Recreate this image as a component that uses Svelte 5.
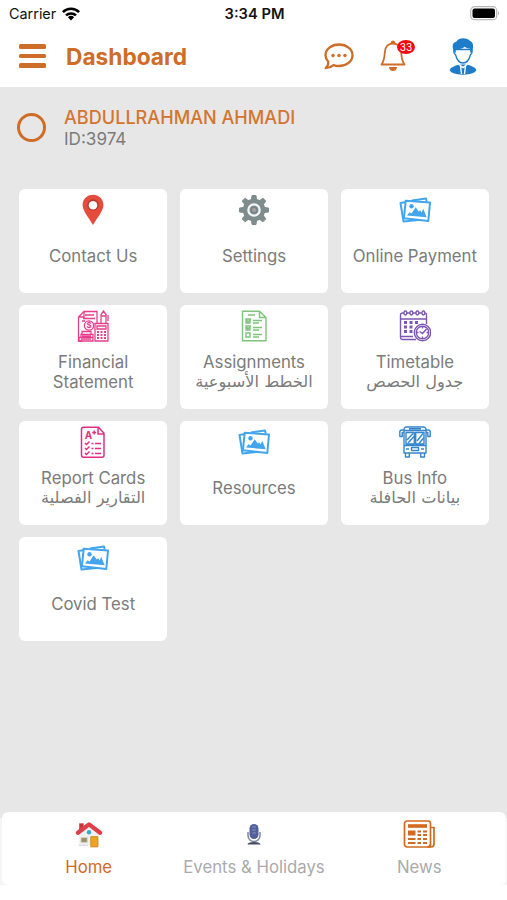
<script>
  const unread = 33;

  const student = {
    name: 'ABDULLRAHMAN AHMADI',
    id: '3974'
  };

  const tiles = [
    { title: 'Contact Us', icon: pin },
    { title: 'Settings', icon: gear },
    { title: 'Online Payment', icon: gallery },
    { title: 'Financial Statement', icon: finance },
    { title: 'Assignments', arabic: 'الخطط الأسبوعية', icon: checklist },
    { title: 'Timetable', arabic: 'جدول الحصص', icon: calendar },
    { title: 'Report Cards', arabic: 'التقارير الفصلية', icon: report },
    { title: 'Resources', icon: gallery },
    { title: 'Bus Info', arabic: 'بيانات الحافلة', icon: bus },
    { title: 'Covid Test', icon: gallery }
  ];

  const tabs = [
    { title: 'Home', icon: house },
    { title: 'Events & Holidays', icon: mic },
    { title: 'News', icon: news }
  ];

  let active = $state('Home');
</script>

{#snippet pin()}
  <svg viewBox="0 0 32 32">
    <path d="M16 .8C10 .8 5.600 5.200 5.600 11c0 5.500 4.900 11 10.400 20 5.500-9 10.400-14.500 10.400-20C26.400 5.200 22 .8 16 .8z" fill="#e64c3c" />
    <circle cx="16" cy="11" r="5.700" fill="#b4382c" />
    <circle cx="16" cy="11.300" r="4.300" fill="#fff" />
  </svg>
{/snippet}

{#snippet gear()}
  <svg viewBox="0 0 32 32">
    <g fill="#7f8c8d">
      <circle cx="16" cy="16" r="11.200" />
      {#each [0, 45, 90, 135, 180, 225, 270, 315] as angle}
        <path d="M13.400 6.500 14 1.500h4l.6 5z" stroke="#7f8c8d" stroke-linejoin="round" transform="rotate({angle} 16 16)" />
      {/each}
    </g>
    <circle cx="16" cy="16" r="5.700" fill="#95a5a6" stroke="#f4f6f6" stroke-width="2.200" />
    <circle cx="16" cy="16" r="3" fill="#a5a29b" stroke="#75868a" stroke-width="1.800" />
  </svg>
{/snippet}

{#snippet gallery()}
  <svg viewBox="0 0 32 32">
    <g fill="none" stroke="#42a5ed" stroke-width="2" stroke-linejoin="round">
      <path d="M7 8 1.500 9l3 18.500L24 25.500M13 6.500l14-2 .7 3" />
      <path d="M6.700 6.800 31 8.500 29.300 27 4.900 24.200z" fill="#fff" />
    </g>
    <circle cx="12.500" cy="12.200" r="2.200" fill="#42a5ed" />
    <path d="m8 21.500 2.500-3.200 2 1.300 4.200-6.300 3 4.200 1.500-1.300 1.400 2.300 1.600-3.800 3.500 8.500z" fill="#42a5ed" />
  </svg>
{/snippet}

{#snippet finance()}
  <svg viewBox="0 0 32 32" fill="none" stroke="#e83e8c" stroke-width="1.300">
    <path d="M8 1.500h12v12M7 1.500 1.500 7v24h4M1.500 7H7V1.500h1M8 5h9M6 8.500h12M5 11h3" />
    <circle cx="12" cy="15.500" r="4.600" />
    <path d="M5 21.500h9v2.800H5zM4 24.300h12v3.200H4zM2 27.500h14v3.500H2zM5 26h9M4 29.200h10M18 13.500h13V31H18zM20 16h9v3h-9z" />
    <path d="M20 22h2m1.500 0h2m1.500 0h2m-9 3h2m1.500 0h2m1.500 0h2m-9 3h2m1.500 0h2m1.500 0h2" stroke-width="1.800" />
    <path d="M24 13V4.500L26.500 1 29 4.500V13M24 6h5M31 5v6" />
    <text x="12" y="18.300" class="glyph dollar" fill="#e83e8c">$</text>
  </svg>
{/snippet}

{#snippet checklist()}
  <svg viewBox="0 0 32 32" fill="none" stroke="#7fc47b" stroke-width="1.400">
    <path d="M4.500 1.200h17L28 7.500v23.300H4.500zM21.500 1.200v6.300H28M10 5h7" />
    <path d="M8 9h4v4H8zM8 16h4v4H8zM8 23h4v4H8zM8.500 10l1.500 2 3-3.500M8.500 17l1.500 2 3-3.500" />
    <path d="M15 10.500h9M15 13h6M15 17.500h9M15 20h6M15 24.500h9M15 27h6" stroke-width="1.700" />
  </svg>
{/snippet}

{#snippet calendar()}
  <svg viewBox="0 0 32 32" fill="none" stroke="#7e57b5" stroke-width="1.400">
    <path d="M17 29.500H3.500a2 2 0 0 1-2-2V5a2 2 0 0 1 2-2h22a2 2 0 0 1 2 2v9M1.500 9h26M2 26.500h12" />
    <g fill="#fff">
      {#each [5, 11, 17, 23] as x}
        <rect {x} y="1" width="2.800" height="4" rx="1.400" />
      {/each}
    </g>
    <path d="M5 12.500h3m2.500 0h3m2.500 0h3M5 17h3m2.500 0h3M5 21.500h3m2.500 0h3" stroke-width="2.800" />
    <circle cx="23.500" cy="22.500" r="8.200" fill="#fff" />
    <circle cx="23.500" cy="22.500" r="6.200" />
    <path d="m20.500 21.500 3 2 4-4.500M23.500 17v1.500m0 8V28M18 22.500h1.500m8 0H29" />
  </svg>
{/snippet}

{#snippet report()}
  <svg viewBox="0 0 32 32" fill="none" stroke="#e22f83" stroke-width="1.500">
    <path d="M6.500 1.200h15l5.500 6v22a2 2 0 0 1-2 2H6.500a2 2 0 0 1-2-2v-26a2 2 0 0 1 2-2zM21 1.500V8h6" stroke-linejoin="round" />
    <path d="m8 17 1.500 1.500 3-3M8 22l1.500 1.500 3-3M8 27l1.500 1.500 3-3M14.500 17.500h2m1.500 0h6M14.500 22.500h2m1.500 0h6M14.500 27.500h2m1.500 0h6" />
    <text x="11.500" y="12.700" class="glyph grade" fill="#e22f83">A</text>
    <path d="M15.200 6.500h4M17.200 4.500v4" />
  </svg>
{/snippet}

{#snippet bus()}
  <svg viewBox="0 0 32 32" fill="none" stroke="#3487cc" stroke-width="1.400" stroke-linejoin="round">
    <path d="M7.500 1h17a2.500 2.500 0 0 1 2.500 2.500V27H5V3.500A2.500 2.500 0 0 1 7.500 1zM5 4.500h22M7 6.500h8.300V18H7zM16.700 6.500H25V18h-8.300zM5 19.500h22M10 2.800h12" />
    <path d="M5 4H3Q.8 4 .8 6v4.500h2.400V6.500H5M27 4h2q2.200 0 2.200 2v4.500h-2.400V6.500H27" />
    <path d="m8 14 6-6.500M9 17l6-6.500M18 15l6-7.500M20 17.500l5-6" />
    <path d="M12.500 21.500h7v3h-7zM7 23h3m12 0h3M6.500 27v4h3.800v-4M21.700 27v4h3.800v-4" />
  </svg>
{/snippet}

{#snippet house()}
  <svg viewBox="-2 -1 36 36">
    <path d="m5 16 11-9 11 9v14H5z" fill="#eef0f2" />
    <path d="M5 5h5v8H5z" fill="#c8323c" />
    <path d="M3.500 15.500 16 6.200l12.500 9.300" fill="none" stroke="#df3f49" stroke-width="4.800" stroke-linecap="round" stroke-linejoin="round" />
    <circle cx="16" cy="15" r="2.500" fill="#3aa6c9" />
    <path d="M7 21h7v5.500H7z" fill="#9a9170" stroke="#d6d2b9" />
    <path d="M18 20h8v11.500h-8z" fill="#eda51f" stroke="#cd861c" />
    <path d="M4 29h11v1.500H4z" fill="#dedede" />
  </svg>
{/snippet}

{#snippet mic()}
  <svg viewBox="0 0 32 32">
    <rect x="11.500" y="6" width="9" height="15" rx="4.500" fill="#526099" />
    <path d="M14 9h4M14 12h4M14 15h4" stroke="#8490bd" stroke-width="1.100" />
    <path d="M10 14v3.500a6 6 0 0 0 12 0V14M16 23v2" fill="none" stroke="#80869a" stroke-width="1.500" />
    <path d="M9.500 26.500q0-2.500 6.500-2.500t6.500 2.500z" fill="#454c65" />
  </svg>
{/snippet}

{#snippet news()}
  <svg viewBox="0 0 32 32" fill="none" stroke="#d2691e" stroke-width="1.700">
    <rect x="1.500" y="3" width="26" height="26" rx="2.500" />
    <path d="M28 9.500h3V26a3 3 0 0 1-3 3h-3.500q3 0 3-3" />
    <path d="M5 8h19" stroke-width="3.600" />
    <path d="M5 15h7.500" stroke-width="5" />
    <path d="M14.500 13.500H18m2 0h4M14.500 17H18m2 0h4M5 21h7.500m2 0H18m2 0h4M5 25h7.500m2 0H18m2 0h4" stroke-width="1.900" />
  </svg>
{/snippet}

<div class="app">
  <div class="status-bar">
    <div class="carrier">
      <span>Carrier</span>
      <svg viewBox="0 0 18 14" width="18" height="14">
        <g fill="none" stroke="#000" stroke-width="2.500">
          <path d="M.9 5.200a11.500 11.500 0 0 1 16.200 0M4 8.400a7.200 7.200 0 0 1 10 0" />
        </g>
        <path d="M5.900 10.300a4.500 4.500 0 0 1 6.200 0L9 13.500z" />
      </svg>
    </div>
    <div class="time">3:34 PM</div>
    <div class="battery">
      <svg viewBox="0 0 30 15" width="30" height="15">
        <rect x=".7" y=".7" width="26" height="13" rx="3.800" fill="none" stroke="#b8b8b8" stroke-width="1.200" />
        <rect x="2.500" y="2.500" width="22.500" height="9.500" rx="2" />
        <path d="M28 5q2 2.200 0 4.500z" fill="#aaa" />
      </svg>
    </div>
  </div>

  <header>
    <button class="menu" aria-label="Menu">
      <span></span>
      <span></span>
      <span></span>
    </button>
    <h1>Dashboard</h1>
    <svg class="chat" viewBox="0 0 30 27" width="30" height="27">
      <path d="M4.300 18.800C2.500 17 1.500 14.800 1.500 12.300 1.500 6.300 7.500 1.500 15 1.500s13.500 4.800 13.500 10.800S22.500 23 15 23c-2 0-3.800-.3-5.500-.9-2.200 1.900-4.900 2.900-7.800 3 1.700-1.700 2.800-3.800 2.600-6.300z" fill="none" stroke="#cd6d28" stroke-width="2.300" stroke-linejoin="round" />
      <g fill="#cd6d28">
        <circle cx="9" cy="12.500" r="1.700" />
        <circle cx="15" cy="12.500" r="1.700" />
        <circle cx="21" cy="12.500" r="1.700" />
      </g>
    </svg>
    <div class="bell">
      <svg viewBox="0 0 26 32" width="26" height="32">
        <path d="M1.500 24.500h23c-2.500-3.500-3-6-3.300-12C21 6.500 17.500 3.500 13 3.500S5 6.500 4.800 12.500c-.3 6-.8 8.500-3.300 12z" fill="none" stroke="#cd6d28" stroke-width="1.800" stroke-linejoin="round" />
        <path d="M10.500 3q.3-2.500 2.500-2.500T15.500 3zM9 27h8q-.5 4-4 4t-4-4z" fill="#cd6d28" />
      </svg>
      <span class="badge">{unread}</span>
    </div>
    <svg class="avatar" viewBox="0 0 30 37" width="30" height="37">
      <path d="M1.500 32c1.500-3 5-4 9.500-5.500h8c4.500 1.500 8 2.500 9.500 5.500L27 34c-6 3.500-18 3.500-24 0z" fill="#1d7dcb" />
      <path d="m10.500 26 4.500 3.500 4.500-3.500M12.500 28l1 8M17.500 28l-1 8" fill="none" stroke="#fff" stroke-width="1.400" />
      <path d="M6.500 11.500c-1.300 1.500-.5 4.500 1 5 1.200 5 4 8.500 7.500 8.500s6.300-3.500 7.500-8.500c1.500-.5 2.300-3.500 1-5z" fill="#fff" stroke="#1d7dcb" stroke-width="1.300" />
      <path d="M6.300 14.500C3.300 8 4.500 4.500 8.500 3.500c2.500-4.500 10-4 13-1 4.500 1.500 4.200 7 2.300 12l-1.300.5-.8-4.500c-2 0-3.700-.8-5-1.800-2.200 1.800-5.200 2.600-8.700 2.600L7.500 15z" fill="#1d7dcb" />
    </svg>
  </header>

  <main>
    <section class="student">
      <div class="ring"></div>
      <div>
        <div class="name">{student.name}</div>
        <div class="id">ID:{student.id}</div>
      </div>
    </section>

    <section class="grid">
      {#each tiles as tile}
        <div class="tile">
          <div class="icon">{@render tile.icon()}</div>
          <div class="label">
            <span>{tile.title}</span>
            {#if tile.arabic}
              <span class="arabic" lang="ar" dir="rtl">{tile.arabic}</span>
            {/if}
          </div>
        </div>
      {/each}
    </section>
  </main>

  <div class="footer">
    <nav>
      {#each tabs as tab}
        <button class="tab" class:active={active === tab.title} onclick={() => (active = tab.title)}>
          <span class="icon">{@render tab.icon()}</span>
          <span>{tab.title}</span>
        </button>
      {/each}
    </nav>
  </div>
</div>

<style>
  :global(body) {
    background: #fff;
  }

  .app {
    display: flex;
    flex-direction: column;
    height: 900px;
    overflow: hidden;
    background: #fff;
    color: #7b7b7b;
    font-family: Inter, "DejaVu Sans", sans-serif;
    font-size: 16.75px;
  }

  svg {
    display: block;
    flex: none;
  }

  button {
    border: none;
    background: none;
    padding: 0;
    font: inherit;
    color: inherit;
  }

  .status-bar {
    display: grid;
    grid-template-columns: 1fr auto 1fr;
    align-items: center;
    height: 27px;
    padding: 0 7px 0 9px;
    color: #111;
    font-size: 14.4px;
  }

  .carrier {
    display: flex;
    align-items: center;
    gap: 6px;
  }

  .time {
    font-size: 14.7px;
    font-weight: 600;
  }

  .battery {
    display: flex;
    justify-content: flex-end;
  }

  header {
    display: flex;
    align-items: center;
    height: 60px;
    padding: 0 29px 2px 19px;
    box-sizing: border-box;
  }

  .menu {
    display: flex;
    flex-direction: column;
    gap: 5px;
    width: 27px;
    margin-right: 20px;
  }

  .menu span {
    height: 4.5px;
    border-radius: 1.5px;
    background: #cd6d28;
  }

  h1 {
    margin: 0;
    flex: 1;
    color: #cd6d28;
    font-size: 22.7px;
    font-weight: 700;
  }

  .chat {
    margin-right: 26px;
  }

  .bell {
    position: relative;
    margin-right: 42px;
  }

  .badge {
    position: absolute;
    left: 17px;
    top: 0;
    width: 18px;
    height: 14px;
    border-radius: 50%;
    background: #f5090c;
    color: #fff;
    font-size: 10px;
    line-height: 14px;
    text-align: center;
  }

  main {
    flex: 1;
    background: #e7e7e7;
  }

  .student {
    display: flex;
    align-items: center;
    gap: 18px;
    height: 82px;
    padding: 0 17px;
  }

  .ring {
    width: 29px;
    height: 29px;
    margin-bottom: 2px;
    box-sizing: border-box;
    border: 3px solid #cd6d28;
    border-radius: 50%;
  }

  .name {
    color: #d4752e;
    font-size: 18.1px;
    font-weight: 500;
    line-height: 21px;
  }

  .id {
    font-size: 17.1px;
    line-height: 21px;
  }

  .grid {
    display: grid;
    grid-template-columns: repeat(3, 1fr);
    grid-auto-rows: 104px;
    gap: 12px 12.5px;
    padding: 20px 18px 0 19px;
  }

  .tile {
    display: flex;
    flex-direction: column;
    align-items: center;
    padding: 5px 10px 7px;
    border-radius: 6px;
    background: #fff;
    text-align: center;
    line-height: 20px;
  }

  .icon {
    width: 32px;
    height: 32px;
  }

  .label {
    flex: 1;
    display: flex;
    flex-direction: column;
    justify-content: center;
  }

  .arabic {
    font-family: "DejaVu Sans", sans-serif;
    font-size: 16.2px;
    white-space: nowrap;
  }

  .glyph {
    font-family: Inter, sans-serif;
    font-weight: 700;
    stroke: none;
    text-anchor: middle;
  }

  .dollar {
    font-size: 8px;
  }

  .grade {
    font-size: 10px;
  }

  .footer {
    height: 88px;
    background: linear-gradient(#e7e7e7 0 6px, #f5f5f5 6px 73px, #fff 73px);
  }

  nav {
    display: grid;
    grid-template-columns: repeat(3, 1fr);
    height: 73px;
    margin: 0 1px 0 2px;
    padding: 0 4px;
    box-sizing: border-box;
    border-radius: 6px;
    background: #fff;
  }

  .tab {
    display: flex;
    flex-direction: column;
    align-items: center;
    gap: 7px;
    padding-top: 6px;
    color: #aaa;
    line-height: 20px;
  }

  .tab.active {
    color: #d2691e;
  }
</style>
